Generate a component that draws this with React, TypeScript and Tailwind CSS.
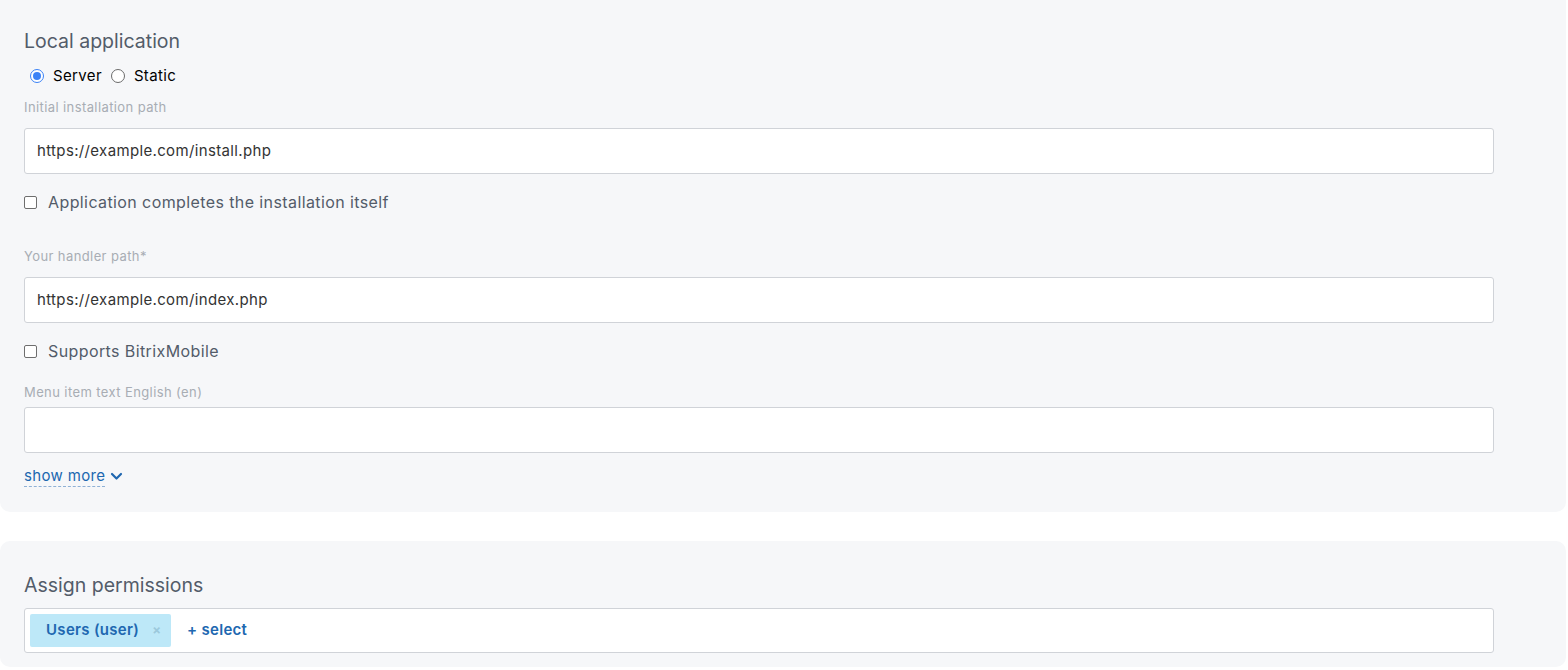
import React from 'react';

function Radio({ checked, label }: { checked?: boolean; label: string }) {
  return (
    <label className="flex items-center gap-[9px]">
      {checked ? (
        <span className="w-[14px] h-[14px] rounded-full border-[1px] border-[#3b82f6] bg-white flex items-center justify-center">
          <span className="w-[8px] h-[8px] rounded-full bg-[#3b82f6]" />
        </span>
      ) : (
        <span className="w-[14px] h-[14px] rounded-full border-[1px] border-[#6b6b6b] bg-white" />
      )}
      <span className="text-[15px] tracking-[0.35px] text-black">{label}</span>
    </label>
  );
}

function Checkbox({ label }: { label: string }) {
  return (
    <label className="flex items-center gap-[11px] h-5">
      <span className="w-[13px] h-[13px] rounded-[2px] border border-[#6e6e6e] bg-white" />
      <span className="text-[16px] tracking-[0.4px] text-[#535c69]">{label}</span>
    </label>
  );
}

function Field({ value }: { value?: string }) {
  return (
    <div className="w-[1470px] h-[46px] border border-[#d0d3d8] rounded-[3px] bg-white flex items-center px-[12px] text-[15px] tracking-[0.35px] text-[#333]">
      {value}
    </div>
  );
}

export default function App() {
  return (
    <div className="bg-white min-h-[670px]" style={{ fontFamily: 'Inter, "Noto Sans", sans-serif' }}>
      <div className="w-[1566px] bg-[#f6f7f9] rounded-b-[10px] pl-[24px] pt-[29px] pb-[26px]">
        <h2 className="text-[19.5px] leading-6 text-[#535c69]">Local application</h2>
        <div className="flex items-center gap-[9px] h-5 mt-[13px] ml-[6px]">
          <Radio checked label="Server" />
          <Radio label="Static" />
        </div>
        <div className="mt-[13px] text-[13px] leading-4 tracking-[0.4px] text-[#a8adb4]">Initial installation path</div>
        <div className="mt-[13px]">
          <Field value="https://example.com/install.php" />
        </div>
        <div className="mt-[18px]">
          <Checkbox label="Application completes the installation itself" />
        </div>
        <div className="mt-[36px] text-[13px] leading-4 tracking-[0.4px] text-[#a8adb4]">Your handler path*</div>
        <div className="mt-[13px]">
          <Field value="https://example.com/index.php" />
        </div>
        <div className="mt-[18px]">
          <Checkbox label="Supports BitrixMobile" />
        </div>
        <div className="mt-[23px] text-[13px] leading-4 tracking-[0.4px] text-[#a8adb4]">Menu item text English (en)</div>
        <div className="mt-[7px]">
          <Field />
        </div>
        <div className="mt-[13px] h-5 flex items-center gap-[5px]">
          <span className="text-[15px] leading-5 tracking-[0.35px] text-[#2067b0] border-b border-dashed border-[#8fb1d6]">show more</span>
          <svg width="13" height="9" viewBox="0 0 13 9" className="mt-[1px]">
            <path d="M2 2l4.5 4.5L11 2" fill="none" stroke="#2067b0" strokeWidth="2.2" strokeLinecap="round" strokeLinejoin="round" />
          </svg>
        </div>
      </div>

      <div className="w-[1566px] mt-[29px] bg-[#f6f7f9] rounded-[10px] pl-[24px] pt-[32px] pb-[14px]">
        <h2 className="text-[19.5px] leading-6 text-[#535c69]">Assign permissions</h2>
        <div className="mt-[11px] w-[1470px] h-[45px] border border-[#d0d3d8] rounded-[3px] bg-white flex items-center pl-[5px]">
          <div className="h-[33px] w-[141px] bg-[#bde8f8] rounded-[2px] flex items-center pl-[16px] text-[15px] tracking-[0.3px] font-semibold text-[#2067b0]">
            Users (user)
            <span className="ml-[13px] text-[13px] text-[#9cc9dc] font-bold">×</span>
          </div>
          <span className="ml-[16px] text-[15px] tracking-[0.3px] font-semibold text-[#2067b0]">+ select</span>
        </div>
      </div>
    </div>
  );
}
